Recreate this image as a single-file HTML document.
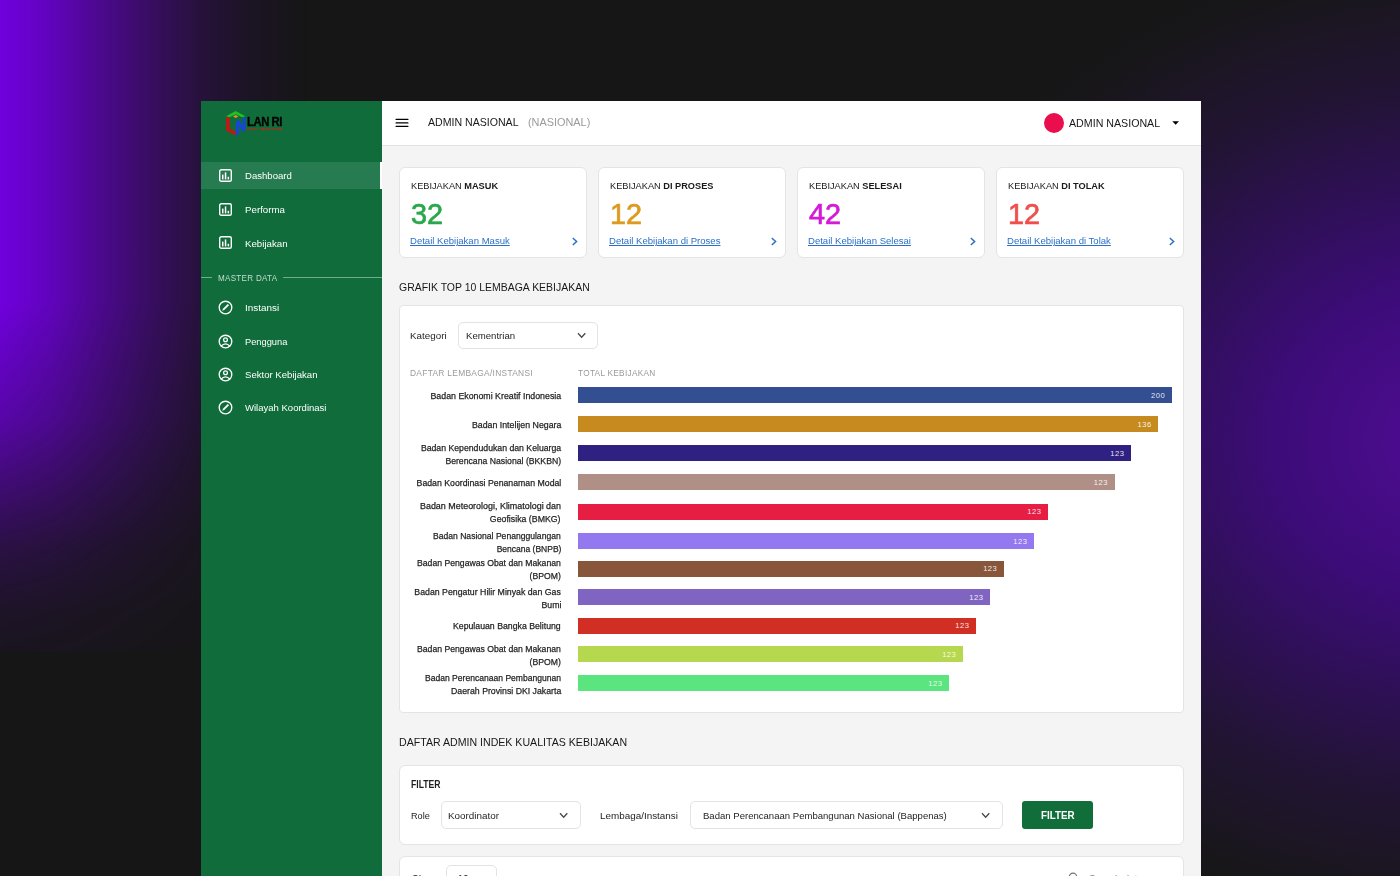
<!DOCTYPE html><html><head><meta charset="utf-8"><style>
*{box-sizing:border-box;margin:0;padding:0}
html,body{width:1400px;height:876px;overflow:hidden}
body{background:#161616;font-family:"Liberation Sans",sans-serif;position:relative}
#bgl{position:absolute;left:0;top:0;width:1400px;height:652px;background:linear-gradient(90deg,rgba(112,0,222,1) 0px,rgba(112,0,222,.84) 50px,rgba(112,0,222,.6) 100px,rgba(112,0,222,.38) 150px,rgba(112,0,222,.19) 200px,rgba(112,0,222,.07) 250px,rgba(112,0,222,0) 310px);-webkit-mask-image:linear-gradient(180deg,#000 0px,#000 300px,rgba(0,0,0,.73) 420px,rgba(0,0,0,.45) 490px,rgba(0,0,0,.23) 548px,rgba(0,0,0,.09) 612px,rgba(0,0,0,.05) 652px)}
#bgr{position:absolute;left:0;top:0;width:1400px;height:876px;background:radial-gradient(ellipse 540px 470px at 1450px 440px,rgb(78,12,148) 0%,rgb(74,12,140) 10%,rgb(60,12,120) 33%,rgb(46,16,85) 55%,rgb(34,20,52) 75%,rgb(28,22,36) 90%,rgba(24,22,26,.6) 100%,rgba(22,22,22,0) 110%)}
.box{position:absolute}
.t{position:absolute;white-space:nowrap;line-height:1}
.card{position:absolute;background:#fff;border:1px solid #e4e4e4;border-radius:6px}
.sel{position:absolute;background:#fff;border:1px solid #e3e3e3;border-radius:5px}
.bar{position:absolute;height:16px}
</style></head><body>
<div id="bgl"></div><div id="bgr"></div>
<div class="box" style="left:201px;top:101px;width:1000px;height:775px;background:#f4f4f4"></div>
<div class="box" style="left:201px;top:101px;width:181px;height:775px;background:#106d3b"></div>
<div class="box" style="left:201px;top:162px;width:179px;height:27px;background:#267b50"></div>
<div class="box" style="left:379.5px;top:162px;width:2.5px;height:27px;background:#fff"></div>
<div class="box" style="left:382px;top:101px;width:819px;height:44px;background:#fff"></div>
<div class="box" style="left:382px;top:145px;width:819px;height:1px;background:#e2e2e2"></div>
<svg class="box" style="left:222px;top:106px" width="66" height="34" viewBox="0 0 66 34">
<polygon points="4.0,10.3 13.7,5.0 23.4,10.3 20.0,11.3 13.7,8.2 7.6,11.3" fill="#22c020"/>
<polygon points="11.0,10.4 13.7,8.9 16.4,10.4 13.7,11.9" fill="#f28c28"/>
<polygon points="4.0,10.8 7.8,11.8 7.8,22.8 13.9,25.6 13.9,29.6 4.0,24.6" fill="#c01812"/>
<polygon points="13.9,15.2 17.0,14.0 20.6,20.6 20.6,12.0 23.7,10.8 23.7,24.4 20.6,25.6 17.0,19.4 17.0,28.3 13.9,29.6" fill="#1845d6"/>
</svg>
<div class="t" style="left:246.70px;top:115.97px;font-size:12.2px;color:#000;font-weight:bold;letter-spacing:-0.5px;transform:scaleX(0.93);transform-origin:left top;-webkit-text-stroke:0.3px #000;">LAN RI</div>
<div class="box" style="left:247px;top:128.1px;width:10.4px;height:1.9px;background:repeating-linear-gradient(90deg,#b02a18 0px,#b02a18 1px,rgba(176,42,24,.45) 1px,rgba(176,42,24,.45) 1.7px);opacity:.8"></div>
<div class="box" style="left:259.7px;top:128.1px;width:10.2px;height:1.9px;background:repeating-linear-gradient(90deg,#b02a18 0px,#b02a18 1px,rgba(176,42,24,.45) 1px,rgba(176,42,24,.45) 1.7px);opacity:.8"></div>
<div class="box" style="left:271.3px;top:128.1px;width:10.7px;height:1.9px;background:repeating-linear-gradient(90deg,#b02a18 0px,#b02a18 1px,rgba(176,42,24,.45) 1px,rgba(176,42,24,.45) 1.7px);opacity:.8"></div>
<svg class="box" style="left:392px;top:112px" width="24" height="22" viewBox="0 0 24 22"><path d="M4.1 7.4 H15.9 M4.1 10.9 H15.9 M4.1 14.4 H15.9" stroke="#000" stroke-width="1.25" stroke-linecap="round"/></svg>
<div class="t" style="left:427.50px;top:117.22px;font-size:11.2px;color:#181818;transform:scaleX(0.946);transform-origin:left top;">ADMIN NASIONAL</div>
<div class="t" style="left:527.60px;top:117.22px;font-size:11.2px;color:#9a9a9a;transform:scaleX(0.973);transform-origin:left top;">(NASIONAL)</div>
<div class="box" style="left:1044px;top:113px;width:20px;height:20px;border-radius:50%;background:#eb0e4e"></div>
<div class="t" style="left:1069.30px;top:117.72px;font-size:11.2px;color:#181818;transform:scaleX(0.952);transform-origin:left top;">ADMIN NASIONAL</div>
<svg class="box" style="left:1172px;top:120px" width="8" height="6" viewBox="0 0 8 6"><polygon points="0.3,1.2 7.0,1.2 3.65,4.7" fill="#000"/></svg>
<svg class="box" style="left:219px;top:169.0px" width="13" height="13" viewBox="0 0 13 13"><rect x="0.7" y="0.7" width="11.6" height="11.6" rx="1.6" fill="none" stroke="#fff" stroke-width="1.4"/><rect x="3.0" y="5.6" width="1.5" height="4.8" fill="#fff"/><rect x="5.8" y="3.4" width="1.5" height="7.0" fill="#fff"/><rect x="8.6" y="7.8" width="1.5" height="2.6" fill="#fff"/></svg>
<div class="t" style="left:245.40px;top:170.87px;font-size:9.6px;color:#fff;transform:scaleX(0.998236);transform-origin:left top;">Dashboard</div>
<svg class="box" style="left:219px;top:202.5px" width="13" height="13" viewBox="0 0 13 13"><rect x="0.7" y="0.7" width="11.6" height="11.6" rx="1.6" fill="none" stroke="#fff" stroke-width="1.4"/><rect x="3.0" y="5.6" width="1.5" height="4.8" fill="#fff"/><rect x="5.8" y="3.4" width="1.5" height="7.0" fill="#fff"/><rect x="8.6" y="7.8" width="1.5" height="2.6" fill="#fff"/></svg>
<div class="t" style="left:245.40px;top:205.37px;font-size:9.6px;color:#fff;transform:scaleX(1.013866);transform-origin:left top;">Performa</div>
<svg class="box" style="left:219px;top:235.8px" width="13" height="13" viewBox="0 0 13 13"><rect x="0.7" y="0.7" width="11.6" height="11.6" rx="1.6" fill="none" stroke="#fff" stroke-width="1.4"/><rect x="3.0" y="5.6" width="1.5" height="4.8" fill="#fff"/><rect x="5.8" y="3.4" width="1.5" height="7.0" fill="#fff"/><rect x="8.6" y="7.8" width="1.5" height="2.6" fill="#fff"/></svg>
<div class="t" style="left:245.40px;top:238.67px;font-size:9.6px;color:#fff;transform:scaleX(1.01074);transform-origin:left top;">Kebijakan</div>
<svg class="box" style="left:218px;top:300.1px" width="15" height="15" viewBox="0 0 15 15"><circle cx="7.5" cy="7.5" r="6.3" fill="none" stroke="#fff" stroke-width="1.35"/><polygon points="4.2,10.8 4.96,8.76 9.76,3.96 11.04,5.24 6.24,10.04" fill="#fff"/></svg>
<div class="t" style="left:245.40px;top:303.07px;font-size:9.6px;color:#fff;transform:scaleX(1.03158);transform-origin:left top;">Instansi</div>
<svg class="box" style="left:218px;top:333.5px" width="15" height="15" viewBox="0 0 15 15"><circle cx="7.5" cy="7.5" r="6.3" fill="none" stroke="#fff" stroke-width="1.35"/><circle cx="7.5" cy="5.8" r="1.9" fill="none" stroke="#fff" stroke-width="1.3"/><path d="M2.9 12.2 Q7.5 7.4 12.1 12.2" fill="none" stroke="#fff" stroke-width="1.3"/></svg>
<div class="t" style="left:245.40px;top:336.77px;font-size:9.6px;color:#fff;transform:scaleX(0.9669760000000001);transform-origin:left top;">Pengguna</div>
<svg class="box" style="left:218px;top:366.5px" width="15" height="15" viewBox="0 0 15 15"><circle cx="7.5" cy="7.5" r="6.3" fill="none" stroke="#fff" stroke-width="1.35"/><circle cx="7.5" cy="5.8" r="1.9" fill="none" stroke="#fff" stroke-width="1.3"/><path d="M2.9 12.2 Q7.5 7.4 12.1 12.2" fill="none" stroke="#fff" stroke-width="1.3"/></svg>
<div class="t" style="left:245.40px;top:369.87px;font-size:9.6px;color:#fff;transform:scaleX(0.999278);transform-origin:left top;">Sektor Kebijakan</div>
<svg class="box" style="left:218px;top:400.0px" width="15" height="15" viewBox="0 0 15 15"><circle cx="7.5" cy="7.5" r="6.3" fill="none" stroke="#fff" stroke-width="1.35"/><polygon points="4.2,10.8 4.96,8.76 9.76,3.96 11.04,5.24 6.24,10.04" fill="#fff"/></svg>
<div class="t" style="left:245.40px;top:402.77px;font-size:9.6px;color:#fff;transform:scaleX(0.991984);transform-origin:left top;">Wilayah Koordinasi</div>
<div class="box" style="left:201px;top:277px;width:11px;height:1.2px;background:#6fae8c"></div>
<div class="box" style="left:282.5px;top:277px;width:99.5px;height:1.2px;background:#6fae8c"></div>
<div class="t" style="left:217.90px;top:273.62px;font-size:8.6px;color:#c5dccf;letter-spacing:0.3px;transform:scaleX(0.94);transform-origin:left top;">MASTER DATA</div>
<div class="card" style="left:399px;top:167px;width:188px;height:91px"></div>
<div class="t" style="left:411.00px;top:181.26px;font-size:9.5px;color:#1a1a1a;transform:scaleX(0.97);transform-origin:left top;">KEBIJAKAN <b>MASUK</b></div>
<div class="t" style="left:411.20px;top:198.64px;font-size:29.6px;color:#29a84b;transform:scaleX(0.975);transform-origin:left top;-webkit-text-stroke:0.7px #29a84b;">32</div>
<div class="t" style="left:410.00px;top:236.37px;font-size:9.6px;color:#2a70c8;transform:scaleX(0.995);transform-origin:left top;text-decoration:underline;">Detail Kebijakan Masuk</div>
<svg class="box" style="left:570.8px;top:236.5px" width="8" height="9" viewBox="0 0 8 9"><path d="M1.8 1 L5.6 4.5 L1.8 8" fill="none" stroke="#2a70c8" stroke-width="1.5"/></svg>
<div class="card" style="left:598px;top:167px;width:188px;height:91px"></div>
<div class="t" style="left:610.00px;top:181.26px;font-size:9.5px;color:#1a1a1a;transform:scaleX(0.97);transform-origin:left top;">KEBIJAKAN <b>DI PROSES</b></div>
<div class="t" style="left:610.20px;top:198.64px;font-size:29.6px;color:#dd9a20;transform:scaleX(0.975);transform-origin:left top;-webkit-text-stroke:0.7px #dd9a20;">12</div>
<div class="t" style="left:609.00px;top:236.37px;font-size:9.6px;color:#2a70c8;transform:scaleX(0.995);transform-origin:left top;text-decoration:underline;">Detail Kebijakan di Proses</div>
<svg class="box" style="left:769.8px;top:236.5px" width="8" height="9" viewBox="0 0 8 9"><path d="M1.8 1 L5.6 4.5 L1.8 8" fill="none" stroke="#2a70c8" stroke-width="1.5"/></svg>
<div class="card" style="left:797px;top:167px;width:188px;height:91px"></div>
<div class="t" style="left:809.00px;top:181.26px;font-size:9.5px;color:#1a1a1a;transform:scaleX(0.97);transform-origin:left top;">KEBIJAKAN <b>SELESAI</b></div>
<div class="t" style="left:809.20px;top:198.64px;font-size:29.6px;color:#d41ad8;transform:scaleX(0.975);transform-origin:left top;-webkit-text-stroke:0.7px #d41ad8;">42</div>
<div class="t" style="left:808.00px;top:236.37px;font-size:9.6px;color:#2a70c8;transform:scaleX(0.995);transform-origin:left top;text-decoration:underline;">Detail Kebijakan Selesai</div>
<svg class="box" style="left:968.8px;top:236.5px" width="8" height="9" viewBox="0 0 8 9"><path d="M1.8 1 L5.6 4.5 L1.8 8" fill="none" stroke="#2a70c8" stroke-width="1.5"/></svg>
<div class="card" style="left:996px;top:167px;width:188px;height:91px"></div>
<div class="t" style="left:1008.00px;top:181.26px;font-size:9.5px;color:#1a1a1a;transform:scaleX(0.97);transform-origin:left top;">KEBIJAKAN <b>DI TOLAK</b></div>
<div class="t" style="left:1008.20px;top:198.64px;font-size:29.6px;color:#f04e4c;transform:scaleX(0.975);transform-origin:left top;-webkit-text-stroke:0.7px #f04e4c;">12</div>
<div class="t" style="left:1007.00px;top:236.37px;font-size:9.6px;color:#2a70c8;transform:scaleX(0.995);transform-origin:left top;text-decoration:underline;">Detail Kebijakan di Tolak</div>
<svg class="box" style="left:1167.8px;top:236.5px" width="8" height="9" viewBox="0 0 8 9"><path d="M1.8 1 L5.6 4.5 L1.8 8" fill="none" stroke="#2a70c8" stroke-width="1.5"/></svg>
<div class="t" style="left:399.30px;top:281.69px;font-size:11px;color:#181818;transform:scaleX(0.951);transform-origin:left top;">GRAFIK TOP 10 LEMBAGA KEBIJAKAN</div>
<div class="card" style="left:399px;top:305px;width:785px;height:408px;border-radius:4px"></div>
<div class="t" style="left:410.40px;top:331.04px;font-size:9.4px;color:#1e1e1e;transform:scaleX(1.049);transform-origin:left top;">Kategori</div>
<div class="sel" style="left:458px;top:321.5px;width:140px;height:27px"></div>
<div class="t" style="left:466.00px;top:331.04px;font-size:9.4px;color:#1e1e1e;transform:scaleX(1.024);transform-origin:left top;">Kementrian</div>
<svg class="box" style="left:576.8px;top:331.8px" width="9.3" height="7" viewBox="0 0 9.3 7"><path d="M1 1.2 L4.65 5.3 L8.3 1.2" fill="none" stroke="#4a4a4a" stroke-width="1.3"/></svg>
<div class="t" style="left:410.40px;top:368.52px;font-size:8.6px;color:#9a9a9a;letter-spacing:0.3px;transform:scaleX(0.976);transform-origin:left top;">DAFTAR LEMBAGA/INSTANSI</div>
<div class="t" style="left:578.20px;top:368.52px;font-size:8.6px;color:#9a9a9a;letter-spacing:0.3px;transform:scaleX(0.96);transform-origin:left top;">TOTAL KEBIJAKAN</div>
<div class="bar" style="left:578px;top:387.4px;width:593.6px;background:#334e91"></div>
<div class="t" style="right:234.90px;top:391.97px;font-size:7.6px;color:rgba(255,255,255,.9);text-align:right;letter-spacing:0.5px;">200</div>
<div class="t" style="right:839.00px;top:391.34px;font-size:9.4px;color:#1e1e1e;text-align:right;transform:scaleX(0.939);transform-origin:right top;-webkit-text-stroke:0.25px #1e1e1e;">Badan Ekonomi Kreatif Indonesia</div>
<div class="bar" style="left:578px;top:416.0px;width:580.2px;background:#c78a1e"></div>
<div class="t" style="right:248.30px;top:420.57px;font-size:7.6px;color:rgba(255,255,255,.9);text-align:right;letter-spacing:0.5px;">136</div>
<div class="t" style="right:839.00px;top:419.94px;font-size:9.4px;color:#1e1e1e;text-align:right;transform:scaleX(0.938);transform-origin:right top;-webkit-text-stroke:0.25px #1e1e1e;">Badan Intelijen Negara</div>
<div class="bar" style="left:578px;top:445.0px;width:553.0px;background:#2e2182"></div>
<div class="t" style="right:275.50px;top:449.57px;font-size:7.6px;color:rgba(255,255,255,.9);text-align:right;letter-spacing:0.5px;">123</div>
<div class="t" style="right:839.00px;top:442.64px;font-size:9.4px;color:#1e1e1e;text-align:right;transform:scaleX(0.928);transform-origin:right top;-webkit-text-stroke:0.25px #1e1e1e;">Badan Kependudukan dan Keluarga</div>
<div class="t" style="right:839.00px;top:455.64px;font-size:9.4px;color:#1e1e1e;text-align:right;transform:scaleX(0.925);transform-origin:right top;-webkit-text-stroke:0.25px #1e1e1e;">Berencana Nasional (BKKBN)</div>
<div class="bar" style="left:578px;top:474.3px;width:536.5px;background:#b08f87"></div>
<div class="t" style="right:292.00px;top:478.87px;font-size:7.6px;color:rgba(255,255,255,.9);text-align:right;letter-spacing:0.5px;">123</div>
<div class="t" style="right:839.00px;top:478.24px;font-size:9.4px;color:#1e1e1e;text-align:right;transform:scaleX(0.932);transform-origin:right top;-webkit-text-stroke:0.25px #1e1e1e;">Badan Koordinasi Penanaman Modal</div>
<div class="bar" style="left:578px;top:503.6px;width:469.9px;background:#e61e44"></div>
<div class="t" style="right:358.60px;top:508.17px;font-size:7.6px;color:rgba(255,255,255,.9);text-align:right;letter-spacing:0.5px;">123</div>
<div class="t" style="right:839.00px;top:501.24px;font-size:9.4px;color:#1e1e1e;text-align:right;transform:scaleX(0.953);transform-origin:right top;-webkit-text-stroke:0.25px #1e1e1e;">Badan Meteorologi, Klimatologi dan</div>
<div class="t" style="right:839.00px;top:514.24px;font-size:9.4px;color:#1e1e1e;text-align:right;transform:scaleX(0.936);transform-origin:right top;-webkit-text-stroke:0.25px #1e1e1e;">Geofisika (BMKG)</div>
<div class="bar" style="left:578px;top:533.0px;width:456.0px;background:#9478ef"></div>
<div class="t" style="right:372.50px;top:537.57px;font-size:7.6px;color:rgba(255,255,255,.9);text-align:right;letter-spacing:0.5px;">123</div>
<div class="t" style="right:839.00px;top:530.64px;font-size:9.4px;color:#1e1e1e;text-align:right;transform:scaleX(0.914);transform-origin:right top;-webkit-text-stroke:0.25px #1e1e1e;">Badan Nasional Penanggulangan</div>
<div class="t" style="right:839.00px;top:543.64px;font-size:9.4px;color:#1e1e1e;text-align:right;transform:scaleX(0.907);transform-origin:right top;-webkit-text-stroke:0.25px #1e1e1e;">Bencana (BNPB)</div>
<div class="bar" style="left:578px;top:560.5px;width:425.8px;background:#87563b"></div>
<div class="t" style="right:402.70px;top:565.07px;font-size:7.6px;color:rgba(255,255,255,.9);text-align:right;letter-spacing:0.5px;">123</div>
<div class="t" style="right:839.00px;top:558.14px;font-size:9.4px;color:#1e1e1e;text-align:right;transform:scaleX(0.923);transform-origin:right top;-webkit-text-stroke:0.25px #1e1e1e;">Badan Pengawas Obat dan Makanan</div>
<div class="t" style="right:839.00px;top:571.14px;font-size:9.4px;color:#1e1e1e;text-align:right;transform:scaleX(0.924);transform-origin:right top;-webkit-text-stroke:0.25px #1e1e1e;">(BPOM)</div>
<div class="bar" style="left:578px;top:589.0px;width:411.9px;background:#7f65c1"></div>
<div class="t" style="right:416.60px;top:593.57px;font-size:7.6px;color:rgba(255,255,255,.9);text-align:right;letter-spacing:0.5px;">123</div>
<div class="t" style="right:839.00px;top:586.64px;font-size:9.4px;color:#1e1e1e;text-align:right;transform:scaleX(0.934);transform-origin:right top;-webkit-text-stroke:0.25px #1e1e1e;">Badan Pengatur Hilir Minyak dan Gas</div>
<div class="t" style="right:839.00px;top:599.64px;font-size:9.4px;color:#1e1e1e;text-align:right;transform:scaleX(0.933);transform-origin:right top;-webkit-text-stroke:0.25px #1e1e1e;">Bumi</div>
<div class="bar" style="left:578px;top:617.5px;width:398.0px;background:#d22f24"></div>
<div class="t" style="right:430.50px;top:622.07px;font-size:7.6px;color:rgba(255,255,255,.9);text-align:right;letter-spacing:0.5px;">123</div>
<div class="t" style="right:839.00px;top:621.44px;font-size:9.4px;color:#1e1e1e;text-align:right;transform:scaleX(0.931);transform-origin:right top;-webkit-text-stroke:0.25px #1e1e1e;">Kepulauan Bangka Belitung</div>
<div class="bar" style="left:578px;top:646.0px;width:384.8px;background:#b5d84e"></div>
<div class="t" style="right:443.70px;top:650.57px;font-size:7.6px;color:rgba(255,255,255,.9);text-align:right;letter-spacing:0.5px;">123</div>
<div class="t" style="right:839.00px;top:643.64px;font-size:9.4px;color:#1e1e1e;text-align:right;transform:scaleX(0.923);transform-origin:right top;-webkit-text-stroke:0.25px #1e1e1e;">Badan Pengawas Obat dan Makanan</div>
<div class="t" style="right:839.00px;top:656.64px;font-size:9.4px;color:#1e1e1e;text-align:right;transform:scaleX(0.924);transform-origin:right top;-webkit-text-stroke:0.25px #1e1e1e;">(BPOM)</div>
<div class="bar" style="left:578px;top:675.2px;width:371.0px;background:#5ae57e"></div>
<div class="t" style="right:457.50px;top:679.77px;font-size:7.6px;color:rgba(255,255,255,.9);text-align:right;letter-spacing:0.5px;">123</div>
<div class="t" style="right:839.00px;top:672.84px;font-size:9.4px;color:#1e1e1e;text-align:right;transform:scaleX(0.913);transform-origin:right top;-webkit-text-stroke:0.25px #1e1e1e;">Badan Perencanaan Pembangunan</div>
<div class="t" style="right:839.00px;top:685.84px;font-size:9.4px;color:#1e1e1e;text-align:right;transform:scaleX(0.932);transform-origin:right top;-webkit-text-stroke:0.25px #1e1e1e;">Daerah Provinsi DKI Jakarta</div>
<div class="t" style="left:399.20px;top:737.03px;font-size:11.3px;color:#181818;transform:scaleX(0.938);transform-origin:left top;">DAFTAR ADMIN INDEK KUALITAS KEBIJAKAN</div>
<div class="card" style="left:399px;top:765px;width:785px;height:80px"></div>
<div class="t" style="left:410.60px;top:780.13px;font-size:10px;color:#1e1e1e;font-weight:bold;transform:scaleX(0.862);transform-origin:left top;">FILTER</div>
<div class="t" style="left:410.60px;top:811.04px;font-size:9.4px;color:#1e1e1e;transform:scaleX(0.973);transform-origin:left top;">Role</div>
<div class="sel" style="left:441px;top:801px;width:140px;height:28px"></div>
<div class="t" style="left:448.40px;top:811.04px;font-size:9.4px;color:#1e1e1e;transform:scaleX(1.053);transform-origin:left top;">Koordinator</div>
<svg class="box" style="left:559.4px;top:811.5px" width="9.3" height="7" viewBox="0 0 9.3 7"><path d="M1 1.2 L4.65 5.3 L8.3 1.2" fill="none" stroke="#4a4a4a" stroke-width="1.3"/></svg>
<div class="t" style="left:600.00px;top:811.04px;font-size:9.4px;color:#1e1e1e;transform:scaleX(1.053);transform-origin:left top;">Lembaga/Instansi</div>
<div class="sel" style="left:690px;top:801px;width:313px;height:28px"></div>
<div class="t" style="left:702.70px;top:811.04px;font-size:9.4px;color:#1e1e1e;transform:scaleX(1.019);transform-origin:left top;">Badan Perencanaan Pembangunan Nasional (Bappenas)</div>
<svg class="box" style="left:980.7px;top:811.5px" width="9.3" height="7" viewBox="0 0 9.3 7"><path d="M1 1.2 L4.65 5.3 L8.3 1.2" fill="none" stroke="#4a4a4a" stroke-width="1.3"/></svg>
<div class="box" style="left:1022px;top:801px;width:71px;height:28px;background:#116e3b;border-radius:3px"></div>
<div class="t" style="left:1040.80px;top:809.99px;font-size:11px;color:#fff;font-weight:bold;transform:scaleX(0.895);transform-origin:left top;">FILTER</div>
<div class="card" style="left:399px;top:856px;width:785px;height:60px"></div>
<div class="sel" style="left:446px;top:865px;width:51px;height:30px"></div>
<svg class="box" style="left:1068px;top:872px" width="12" height="12" viewBox="0 0 12 12"><circle cx="5" cy="5" r="3.8" fill="none" stroke="#777" stroke-width="1.2"/></svg>
<div class="t" style="left:412.00px;top:874.53px;font-size:10px;color:#222;">Show</div>
<div class="t" style="left:457.40px;top:874.53px;font-size:10px;color:#222;">10</div>
<div class="t" style="left:1089.00px;top:874.53px;font-size:10px;color:#888;">Search data...</div>
</body></html>
